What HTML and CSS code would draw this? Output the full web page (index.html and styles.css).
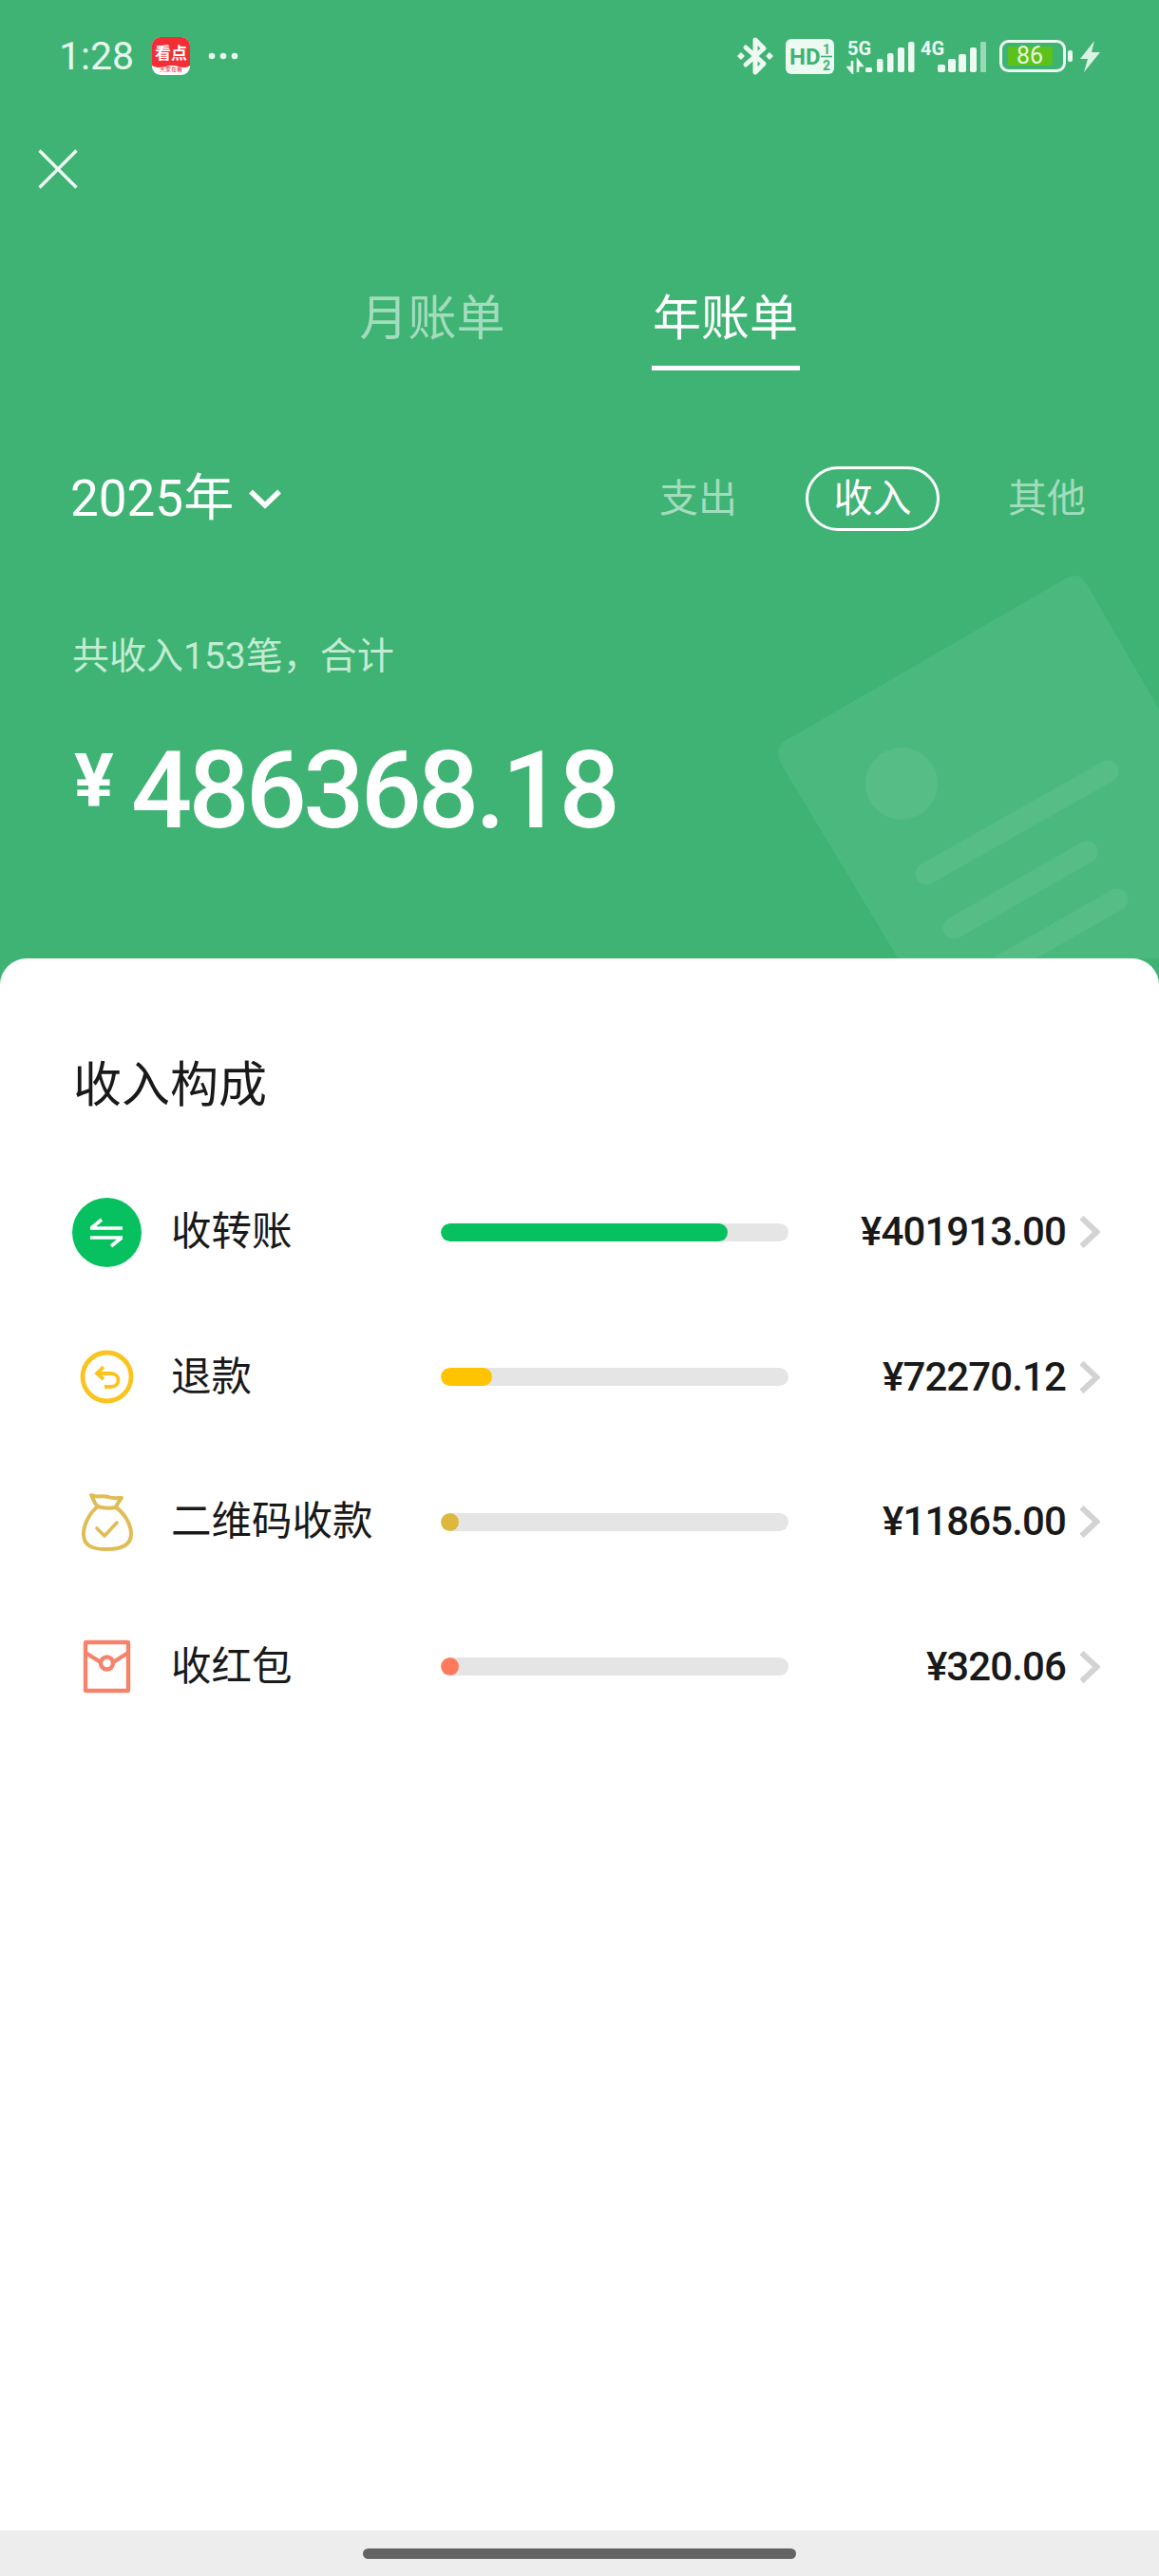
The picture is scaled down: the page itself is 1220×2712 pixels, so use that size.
FILE: index.html
```html
<!DOCTYPE html>
<html lang="zh-CN">
<head>
<meta charset="utf-8">
<title>账单</title>
<link rel="stylesheet" href="styles.css">
</head>
<body>
<div class="page">
  <section class="hero">
    <svg class="deco" width="420" height="420" viewBox="800 590 420 420">
      <path class="deco-card" d="M828 779 L1122 609 Q1136 601 1144 615 L1400 1060 L1000 1100 L822 804 Q814 787 828 779Z"/>
      <circle class="deco-mark" cx="949" cy="825" r="38"/>
      <path class="deco-line" d="M975 920 L1166 812 M1004 977 L1144 897 M1048 1020 L1176 947"/>
    </svg>
    <header class="status">
      <div class="status-left">
        <span class="time">1:28</span>
        <svg class="app-icon" width="40" height="40" viewBox="0 0 40 40">
          <rect width="40" height="40" rx="9" fill="#fff"/>
          <path d="M0 9a9 9 0 0 1 9-9h22a9 9 0 0 1 9 9v21c-7 5-13 -1-20 0s-13 4-20 0z" fill="#f22e36"/>
          <text x="20" y="23" class="app-icon-title">看点</text>
          <text x="20" y="36" class="app-icon-sub">大家在看</text>
        </svg>
        <svg class="dots" width="32" height="8" viewBox="0 0 32 8"><circle cx="4" cy="4" r="3.3"/><circle cx="16" cy="4" r="3.3"/><circle cx="28" cy="4" r="3.3"/></svg>
      </div>
      <div class="status-right">
        <svg class="bt" width="38" height="42" viewBox="0 0 38 42">
          <path class="bt-line" d="M9 12 L28 29 L19 38 V4 L28 13 L9 30"/>
          <path class="bt-dot" d="M4 17l4 4-4 4-4-4zM34 17l4 4-4 4-4-4z"/>
        </svg>
        <svg class="hd" width="51" height="37" viewBox="0 0 51 37">
          <rect width="51" height="37" rx="6" fill="#ecfaf2"/>
          <text x="4" y="27" class="hd-main">HD</text>
          <text x="43" y="16" class="hd-small">1</text>
          <path d="M37 18.5h12" stroke="#3eb373" stroke-width="1.6"/>
          <text x="43" y="33" class="hd-small">2</text>
        </svg>
        <svg class="sig sig-5g" width="72" height="38" viewBox="0 0 72 38">
          <text x="1" y="18" class="net">5G</text>
          <path class="net-arrows" d="M6 24v12l-4-5h4M12 36V24l4 5h-4"/>
          <rect class="bar-shape" x="20" y="31" width="7" height="5" rx="1.5"/>
          <rect class="bar-shape" x="32" y="22" width="6.5" height="14" rx="2"/>
          <rect class="bar-shape" x="43" y="16" width="6.5" height="20" rx="2"/>
          <rect class="bar-shape" x="54" y="10" width="7" height="26" rx="2"/>
          <rect class="bar-shape" x="65" y="4" width="6.5" height="32" rx="2"/>
        </svg>
        <svg class="sig sig-4g" width="71" height="38" viewBox="0 0 71 38">
          <text x="2" y="18" class="net">4G</text>
          <rect class="bar-shape" x="20" y="28" width="8" height="8" rx="2"/>
          <rect class="bar-shape" x="31" y="22" width="8" height="14" rx="2"/>
          <rect class="bar-shape" x="42" y="17" width="8" height="19" rx="2"/>
          <rect class="bar-shape" x="54" y="10" width="7" height="26" rx="2"/>
          <rect class="bar-dim" x="65" y="4" width="6" height="32" rx="1"/>
        </svg>
        <svg class="battery" width="78" height="35" viewBox="0 0 78 35">
          <rect x="1.5" y="1.5" width="67" height="31" rx="8" class="batt-body"/>
          <rect x="9" y="7" width="47" height="20" fill="#5bc21b"/>
          <text x="32" y="25" class="batt-text">86</text>
          <rect x="72" y="11" width="5" height="12" rx="2" fill="#ecfaf2"/>
        </svg>
        <svg class="bolt" width="21" height="33" viewBox="0 0 21 33"><path d="M15 0 L0 19 H8 L4 33 L21 12 H12Z"/></svg>
      </div>
    </header>

    <button class="close" type="button" aria-label="关闭">
      <svg width="42" height="42" viewBox="0 0 42 42"><path d="M1.5 1.5 L40.5 40.5 M40.5 1.5 L1.5 40.5"/></svg>
    </button>

    <nav class="tabs">
      <span class="tab">月账单</span>
      <span class="tab tab-active">年账单</span>
    </nav>

    <div class="filter-row">
      <div class="year">
        <span>2025年</span>
        <svg class="year-chevron" width="36" height="22" viewBox="0 0 36 22"><path d="M3 3.5 L18 18 L33 3.5"/></svg>
      </div>
      <div class="types">
        <span class="type">支出</span>
        <span class="type type-active">收入</span>
        <span class="type">其他</span>
      </div>
    </div>

    <p class="summary">共收入153笔，合计</p>
    <div class="total"><span class="total-yen">¥</span><span class="total-num">486368.18</span></div>
  </section>

  <main class="sheet">
    <h2 class="sheet-title">收入构成</h2>
    <ul class="rows">
      <li class="row">
        <span class="row-icon">
          <svg width="73" height="73" viewBox="0 0 73 73">
            <circle cx="36.5" cy="36.5" r="36.5" fill="#07c160"/>
            <path d="M19 32 H53 M31 23 L20 32 M19 42 H53 M41 51 L52 42" fill="none" stroke="#fff" stroke-width="3.6"/>
          </svg>
        </span>
        <span class="row-label">收转账</span>
        <span class="track"><span class="fill fill-green" style="width:302px"></span></span>
        <span class="row-amount">¥401913.00</span>
        <svg class="row-chevron" width="22" height="34" viewBox="0 0 22 34"><path d="M2.5 2 L18.5 17 L2.5 32"/></svg>
      </li>
      <li class="row">
        <span class="row-icon">
          <svg width="73" height="73" viewBox="0 0 73 73" fill="none" stroke="#fac31e">
            <circle cx="36.5" cy="36.5" r="25.5" stroke-width="4.8"/>
            <path d="M27 33 H41 C51 33 51 47 41 47 H34 M33 26 L26 33 L33 39" stroke-width="3.8"/>
          </svg>
        </span>
        <span class="row-label">退款</span>
        <span class="track"><span class="fill fill-yellow" style="width:54px"></span></span>
        <span class="row-amount">¥72270.12</span>
        <svg class="row-chevron" width="22" height="34" viewBox="0 0 22 34"><path d="M2.5 2 L18.5 17 L2.5 32"/></svg>
      </li>
      <li class="row">
        <span class="row-icon">
          <svg width="73" height="73" viewBox="0 0 73 73" fill="none" stroke="#e0bc55" stroke-linejoin="round" stroke-linecap="round">
            <path d="M27 20 C22 16 22 10 20 8 C27 11 32 8 38 10 C43 12 48 11 52 11 C50 14 47 17 46 21 C55 27 62 39 62 49 C62 62 50 65 36 65 C22 65 12 62 12 49 C12 38 19 26 27 20 Z M27 20 C33 22 40 22 46 21" stroke-width="4"/>
            <path d="M26 43 L34 51 L47 37" stroke-width="3.6"/>
          </svg>
        </span>
        <span class="row-label">二维码收款</span>
        <span class="track"><span class="fill fill-gold" style="width:19px"></span></span>
        <span class="row-amount">¥11865.00</span>
        <svg class="row-chevron" width="22" height="34" viewBox="0 0 22 34"><path d="M2.5 2 L18.5 17 L2.5 32"/></svg>
      </li>
      <li class="row">
        <span class="row-icon">
          <svg width="73" height="73" viewBox="0 0 73 73" fill="none" stroke="#f5836b" stroke-width="4.4">
            <rect x="14" y="11" width="45" height="51" rx="1"/>
            <path d="M14 22 L30 32 M59 22 L43 32"/>
            <circle cx="36.5" cy="33" r="6.5"/>
          </svg>
        </span>
        <span class="row-label">收红包</span>
        <span class="track"><span class="fill fill-coral" style="width:19px"></span></span>
        <span class="row-amount">¥320.06</span>
        <svg class="row-chevron" width="22" height="34" viewBox="0 0 22 34"><path d="M2.5 2 L18.5 17 L2.5 32"/></svg>
      </li>
    </ul>
  </main>

  <footer class="gesture"><span class="gesture-pill"></span></footer>
</div>
</body>
</html>
```

FILE: styles.css
```css
* { box-sizing: border-box; }
html, body { margin: 0; padding: 0; }
body {
  font-family: Roboto, "Noto Sans CJK SC", sans-serif;
  background: #3eb373;
}
.page {
  width: 1220px;
  height: 2712px;
  display: flex;
  flex-direction: column;
  background: #3eb373;
  overflow: hidden;
}

/* hero */
.hero {
  position: relative;
  height: 1009px;
  flex: none;
  overflow: hidden;
  color: #fff;
}
.deco { position: absolute; left: 800px; top: 590px; }
.deco-card { fill: #4bb97e; }
.deco-mark { fill: #56bd86; }
.deco-line { fill: none; stroke: #56bd86; stroke-width: 23; stroke-linecap: round; }

/* status bar */
.status {
  position: relative;
  height: 118px;
  padding: 0 62px;
  display: flex;
  align-items: center;
  justify-content: space-between;
}
.status-left { display: flex; align-items: center; }
.time {
  font-size: 41px;
  line-height: 48px;
  color: #e6f8ee;
  width: 98px;
}
.app-icon-title { font-size: 17px; font-weight: 700; fill: #fff; text-anchor: middle; }
.app-icon-sub { font-size: 6px; fill: #e0262e; text-anchor: middle; }
.dots { margin-left: 19px; fill: #e6f8ee; }
.status-right { display: flex; align-items: center; }
.bt { margin-right: 13px; }
.bt-line { fill: none; stroke: #ecfaf2; stroke-width: 5; stroke-linejoin: round; stroke-linecap: round; }
.bt-dot { fill: #ecfaf2; }
.hd { margin-right: 13px; }
.hd-main { font-size: 24px; font-weight: 700; fill: #3eb373; }
.hd-small { font-size: 14px; font-weight: 700; fill: #3eb373; text-anchor: middle; }
.net { font-size: 20px; font-weight: 700; fill: #ecfaf2; }
.net-arrows { fill: none; stroke: #ecfaf2; stroke-width: 2.6; }
.bar-shape { fill: #ecfaf2; }
.bar-dim { fill: #9ad9b6; }
.sig-5g { margin-right: 4px; }
.sig-4g { margin-right: 14px; }
.batt-body { fill: none; stroke: #ecfaf2; stroke-width: 3; }
.batt-text { font-size: 25px; fill: #e6f8df; text-anchor: middle; }
.bolt { margin-left: 7px; fill: #d9f3e4; }

/* close */
.close {
  position: relative;
  display: block;
  margin: 39px 0 0 40px;
  padding: 0;
  width: 42px;
  height: 42px;
  border: 0;
  background: none;
}
.close svg { display: block; fill: none; stroke: #eefaf3; stroke-width: 3.4; }

/* tabs */
.tabs {
  position: relative;
  margin-top: 105px;
  display: flex;
  justify-content: center;
  gap: 154px;
}
.tab {
  font-size: 51px;
  line-height: 64px;
  padding-bottom: 22px;
  color: #a3dcbd;
}
.tab-active {
  color: #fff;
  padding-bottom: 17px;
  border-bottom: 5px solid #fff;
  width: 156px;
  text-align: center;
}

/* filters */
.filter-row {
  position: relative;
  margin-top: 101px;
  padding: 0 77px 0 74px;
  height: 68px;
  display: flex;
  align-items: center;
  justify-content: space-between;
}
.year {
  display: flex;
  align-items: center;
  gap: 15px;
  font-size: 53px;
  line-height: 68px;
}
.year-chevron { fill: none; stroke: #fff; stroke-width: 5.5; }
.types { display: flex; align-items: center; }
.type {
  font-size: 41px;
  line-height: 62px;
  color: #a3dcbd;
}
.type-active {
  margin: 0 72px;
  width: 141px;
  height: 68px;
  text-align: center;
  color: #fff;
  border: 3px solid #fff;
  border-radius: 34px;
}

/* totals */
.summary {
  position: relative;
  margin: 107px 0 0 76px;
  font-size: 39px;
  line-height: 50px;
  color: #c2ebd3;
}
.total {
  position: relative;
  margin: 57px 0 0 78px;
  display: flex;
  align-items: flex-start;
  line-height: 120px;
}
.total-yen {
  font-size: 78px;
  font-weight: 700;
  line-height: 100px;
  width: 60px;
}
.total-num {
  font-size: 113px;
  font-weight: 500;
  letter-spacing: -3.8px;
}

/* sheet */
.sheet {
  flex: 1;
  background: #fff;
  border-radius: 28px 28px 0 0;
  padding-top: 104px;
}
.sheet-title {
  margin: 0 0 0 77px;
  font-size: 51px;
  line-height: 60px;
  font-weight: 400;
  color: #191919;
}
.rows {
  list-style: none;
  margin: 48px 0 0;
  padding: 0 62px 0 76px;
}
.row {
  height: 152.5px;
  display: flex;
  align-items: center;
}
.row-icon { width: 104px; flex: none; display: flex; }
.row-label {
  width: 284px;
  flex: none;
  font-size: 42.5px;
  line-height: 56px;
  color: #191919;
}
.track {
  width: 366px;
  height: 19px;
  flex: none;
  border-radius: 10px;
  background: #e5e5e5;
  overflow: hidden;
  display: flex;
}
.fill { display: block; height: 100%; border-radius: 10px; }
.fill-green { background: #07c160; }
.fill-yellow { background: #ffc300; }
.fill-gold { background: #ddb83f; }
.fill-coral { background: #ff7a5c; }
.row-amount {
  flex: 1;
  text-align: right;
  font-size: 42px;
  line-height: 56px;
  font-weight: 500;
  color: #191919;
  letter-spacing: -0.9px;
}
.row-chevron {
  flex: none;
  margin-left: 14px;
  fill: none;
  stroke: #d3d3d3;
  stroke-width: 6;
}

/* gesture bar */
.gesture {
  height: 48px;
  flex: none;
  background: #ededed;
  display: flex;
  justify-content: center;
  padding-top: 19px;
}
.gesture-pill {
  width: 456px;
  height: 11px;
  border-radius: 6px;
  background: #636363;
}
```
